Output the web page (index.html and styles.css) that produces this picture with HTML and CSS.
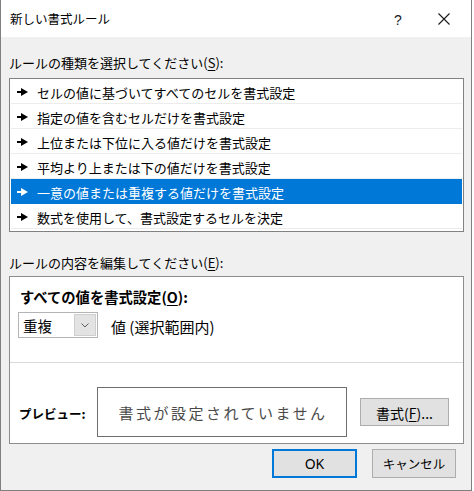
FILE: index.html
```html
<!DOCTYPE html>
<html lang="ja">
<head>
<meta charset="utf-8">
<title>新しい書式ルール</title>
<link rel="stylesheet" href="styles.css">
</head>
<body>
<div class="window">
  <div class="titlebar">
    <span class="title">新しい書式ルール</span>
    <span class="cap-btn help">?</span>
    <span class="cap-btn close">
      <svg width="12" height="12" viewBox="0 0 12 12"><path d="M0.5 0.5 L11.5 11.5 M11.5 0.5 L0.5 11.5" stroke="#1a1a1a" stroke-width="1.1" fill="none"/></svg>
    </span>
  </div>
  <div class="content">
    <div class="label first">ルールの種類を選択してください(<u>S</u>):</div>
    <ul class="list">
      <li><span class="arrow"></span>セルの値に基づいてすべてのセルを書式設定</li>
      <li><span class="arrow"></span>指定の値を含むセルだけを書式設定</li>
      <li><span class="arrow"></span>上位または下位に入る値だけを書式設定</li>
      <li><span class="arrow"></span>平均より上または下の値だけを書式設定</li>
      <li class="selected"><span class="arrow"></span>一意の値または重複する値だけを書式設定</li>
      <li><span class="arrow"></span>数式を使用して、書式設定するセルを決定</li>
    </ul>
    <div class="label second">ルールの内容を編集してください(<u>E</u>):</div>
    <div class="editbox">
      <div class="edit-top">
        <div class="bold heading">すべての値を書式設定(<u>O</u>):</div>
        <div class="combo-row">
          <div class="combo">
            <span class="combo-text">重複</span>
            <span class="combo-btn">
              <svg width="8" height="5" viewBox="0 0 8 5"><path d="M0.5 0.5 L4 4 L7.5 0.5" stroke="#606060" stroke-width="1" fill="none"/></svg>
            </span>
          </div>
          <span class="combo-suffix">値 (選択範囲内)</span>
        </div>
      </div>
      <div class="preview-row">
        <span class="bold preview-label">プレビュー:</span>
        <div class="preview">書式が設定されていません</div>
        <button class="btn fmt">書式(<u>F</u>)...</button>
      </div>
    </div>
    <div class="footer">
      <button class="btn ok">OK</button>
      <button class="btn cancel">キャンセル</button>
    </div>
  </div>
</div>
</body>
</html>
```
FILE: styles.css
```css
* { box-sizing: border-box; }
html, body { margin: 0; padding: 0; background: #ffffff; }
body {
  font-family: "Noto Sans CJK JP", "Noto Sans", sans-serif;
  color: #000;
  width: 474px;
  height: 491px;
  overflow: hidden;
}
.window {
  width: 472px;
  height: 491px;
  border: 1px solid #7f7f7f;
  border-top: none;
  display: flex;
  flex-direction: column;
}
.titlebar {
  height: 37px;
  background: #ffffff;
  display: flex;
  align-items: center;
  padding-right: 4px;
}
.title {
  font-size: 12.5px;
  padding-left: 9px;
  flex: 1;
  line-height: 20px;
  padding-top: 1px;
}
.cap-btn {
  width: 46px;
  height: 37px;
  display: flex;
  align-items: center;
  justify-content: center;
}
.help {
  font-family: "Liberation Sans", sans-serif;
  font-size: 14px;
  color: #1a1a1a;
  padding-top: 2px;
}
.content {
  flex: 1;
  background: #f0f0f0;
  padding: 0 0 0 8px;
}
.label {
  font-size: 13px;
  line-height: 20px;
  height: 20px;
}
.label.first { margin-top: 16px; margin-bottom: 5px; }
.label.second { margin-top: 21px; margin-bottom: 3px; }
u { text-decoration: underline; text-underline-offset: 2px; }
.list {
  list-style: none;
  margin: 0;
  width: 455px;
  height: 154px;
  border: 1px solid #828282;
  background: #ffffff;
  padding: 0 1px 2px 1px;
}
.list li {
  height: 25px;
  border-bottom: 1px solid #ececec;
  display: flex;
  align-items: center;
  padding-left: 6px;
  padding-top: 2px;
  font-size: 13px;
  white-space: nowrap;
}
.list li.selected {
  background: #0078d7;
  color: #ffffff;
  border-bottom-color: #0078d7;
}
.arrow {
  position: relative;
  width: 10px;
  height: 8px;
  margin-right: 10px;
  flex: none;
}
.arrow::before {
  content: "";
  position: absolute;
  left: 0;
  top: 3px;
  width: 5px;
  height: 2px;
  background: currentColor;
}
.arrow::after {
  content: "";
  position: absolute;
  left: 4px;
  top: 0;
  border-left: 7px solid currentColor;
  border-top: 4px solid transparent;
  border-bottom: 4px solid transparent;
}
.editbox {
  width: 455px;
  height: 168px;
  border: 1px solid #8d8d8d;
  background: #ffffff;
  display: flex;
  flex-direction: column;
}
.edit-top {
  padding: 10px 0 24px 8px;
  border-bottom: 1px solid #d9d9d9;
}
.bold { font-weight: bold; }
.heading {
  font-size: 14.3px;
  line-height: 20px;
  height: 20px;
  margin-left: 2px;
  margin-bottom: 5px;
}
.combo-row {
  display: flex;
  align-items: center;
}
.combo {
  width: 80px;
  height: 26px;
  border: 1px solid #b4b4b4;
  display: flex;
  align-items: center;
  padding: 1px;
}
.combo-text {
  flex: 1;
  font-size: 14.5px;
  padding-left: 3px;
  padding-top: 1px;
}
.combo-btn {
  width: 22px;
  height: 22px;
  background: #e3e3e3;
  border: 1px solid #cfcfcf;
  display: flex;
  align-items: center;
  justify-content: center;
}
.combo-suffix {
  margin-left: 13px;
  font-size: 15px;
  padding-top: 2px;
}
.preview-row {
  display: flex;
  align-items: center;
  padding: 24px 0 0 8px;
}
.preview-label {
  width: 79px;
  font-size: 12.5px;
  padding-left: 1px;
  padding-top: 2px;
}
.preview {
  width: 250px;
  height: 50px;
  border: 1px solid #6e6e6e;
  display: flex;
  align-items: center;
  justify-content: center;
  font-size: 15px;
  letter-spacing: 2.5px;
  color: #4a4a4a;
  padding-left: 2px;
}
.btn {
  font-family: "Noto Sans CJK JP", "Noto Sans", sans-serif;
  background: #e1e1e1;
  border: 1px solid #adadad;
  color: #000;
  padding: 0;
  margin: 0;
  display: flex;
  align-items: center;
  justify-content: center;
}
.fmt {
  width: 89px;
  height: 28px;
  margin-left: 13px;
  font-size: 14px;
  padding-top: 1px;
}
.footer {
  display: flex;
  justify-content: flex-end;
  padding-right: 15px;
  margin-top: 5px;
  gap: 15px;
}
.ok {
  width: 85px;
  height: 29px;
  border: 2px solid #0078d7;
  font-family: "Noto Sans", sans-serif;
  font-size: 14px;
}
.cancel {
  width: 84px;
  height: 29px;
  font-size: 12.5px;
}
```
